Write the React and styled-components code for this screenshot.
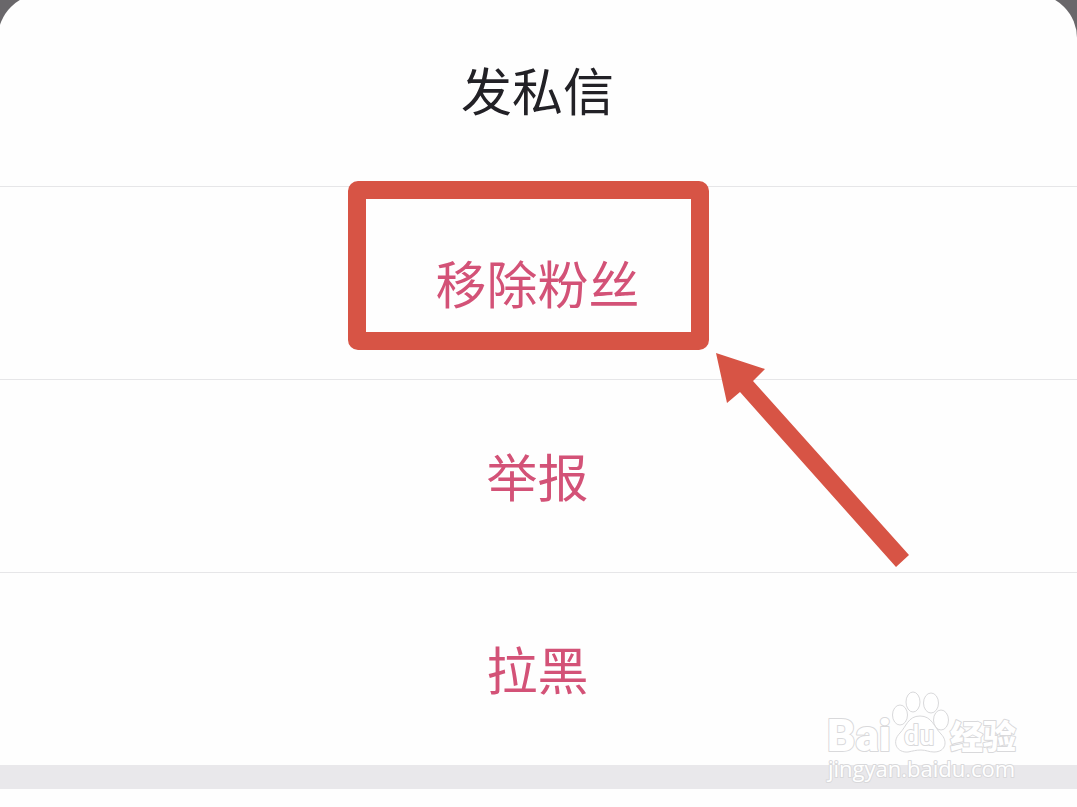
import styled, { createGlobalStyle } from 'styled-components';

const options = [
  { label: '发私信' },
  { label: '移除粉丝', danger: true, marked: true },
  { label: '举报', danger: true },
  { label: '拉黑', danger: true },
];

function Pointer() {
  return (
    <Arrow viewBox="0 0 194 216" aria-hidden="true">
      <path d="M0 0 L49 16 L37 28 L193 202 L180 214 L24 39 L11 50 Z" />
    </Arrow>
  );
}

function Watermark() {
  return (
    <Mark viewBox="0 0 210 104">
      <LogoText x="10" y="71" $size={44} $weight={900}>
        Bai
      </LogoText>
      <Paw>
        <ellipse cx="83" cy="35" rx="7.5" ry="10" />
        <ellipse cx="96" cy="22" rx="7" ry="10" />
        <ellipse cx="114" cy="23" rx="7.5" ry="10" />
        <ellipse cx="124" cy="40" rx="7.5" ry="10" />
        <path d="M103 36 C91 36 89 47 83 53 C74 62 80 73 91 72 C96 71 99 70 104 70 C109 70 112 72 117 72 C129 72 131 61 124 54 C117 47 115 36 103 36 Z" />
      </Paw>
      <LogoText x="87" y="65" $size={27} $weight={500}>
        du
      </LogoText>
      <LogoText x="133" y="69" $size={33} $weight={900}>
        经验
      </LogoText>
      <Address x="11" y="97">
        jingyan.baidu.com
      </Address>
    </Mark>
  );
}

function App() {
  return (
    <>
      <GlobalStyle />
      <Sheet>
        {options.map(({ label, danger, marked }) => (
          <Row key={label}>
            <Option type="button" $danger={danger}>
              {label}
            </Option>
            {marked && <Frame />}
            {marked && <Pointer />}
          </Row>
        ))}
        <Divider />
        <Footer />
        <Watermark />
      </Sheet>
    </>
  );
}

export default App;

const GlobalStyle = createGlobalStyle`
  body {
    margin: 0;
    background: #69676a;
    overflow: hidden;
  }
`;

const Sheet = styled.main`
  position: relative;
  margin: -6px 0 0 -2px;
  border-radius: 44px 44px 0 0;
  background: #fefefe;
  font-family: 'Noto Sans CJK SC', sans-serif;
`;

const Row = styled.div`
  position: relative;
  border-bottom: 1px solid #e6e6e8;

  &:nth-child(4) {
    border-bottom: 0;
  }
`;

const Option = styled.button`
  display: block;
  box-sizing: border-box;
  width: 100%;
  height: 192px;
  padding: 0 0 2px;
  border: 0;
  background: none;
  color: ${({ $danger }) => ($danger ? '#d35277' : '#222126')};
  font-family: inherit;
  font-size: 51px;
  line-height: 72px;
`;

const Frame = styled.div`
  position: absolute;
  top: -6px;
  left: calc(50% - 190px);
  box-sizing: border-box;
  width: 361px;
  height: 169px;
  border: 18px solid #d75445;
  border-radius: 10px;
  pointer-events: none;
`;

const Arrow = styled.svg`
  position: absolute;
  z-index: 1;
  top: 166px;
  left: calc(50% + 178px);
  width: 194px;
  height: 216px;
  fill: #d75445;
  pointer-events: none;
`;

const Divider = styled.div`
  height: 24px;
  background: #e9e8eb;
`;

const Footer = styled.div`
  height: 18px;
`;

const Mark = styled.svg`
  position: absolute;
  right: 50px;
  bottom: 23px;
  width: 210px;
  height: 104px;
  pointer-events: none;
`;

const LogoText = styled.text`
  fill: #fff;
  stroke: #d9d9db;
  stroke-width: 2px;
  stroke-linejoin: round;
  paint-order: stroke;
  font-family: Roboto, 'Noto Sans CJK SC', sans-serif;
  font-size: ${({ $size }) => $size}px;
  font-weight: ${({ $weight }) => $weight};
`;

const Address = styled(LogoText)`
  font-family: 'Open Sans', sans-serif;
  font-size: 22px;
  font-weight: 400;
`;

const Paw = styled.g`
  fill: #fff;
  stroke: #d9d9db;
  stroke-width: 1px;
`;
